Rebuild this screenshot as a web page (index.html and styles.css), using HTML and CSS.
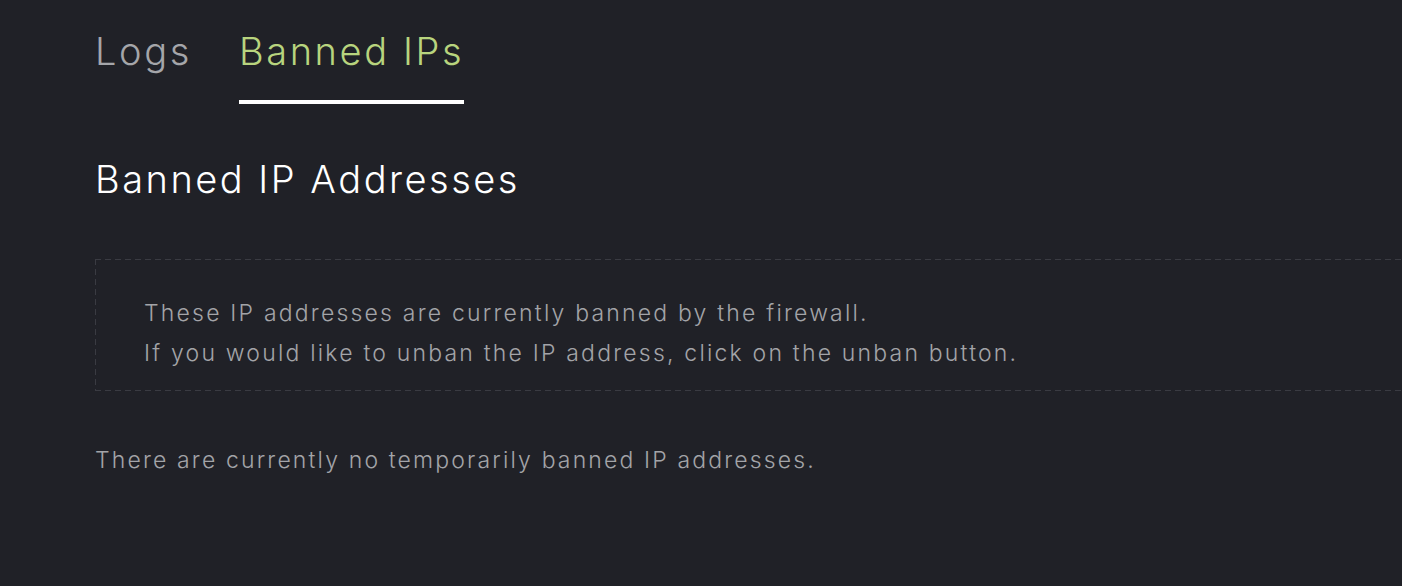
FILE: index.html
```html
<!DOCTYPE html>
<html>
<head>
<meta charset="utf-8">
<link rel="stylesheet" href="styles.css">
</head>
<body>
<div class="page">
  <nav class="tabs">
    <a class="tab">Logs</a>
    <a class="tab active">Banned IPs</a>
  </nav>
  <h1 class="title">Banned IP Addresses</h1>
  <div class="notice">
    <p>These IP addresses are currently banned by the firewall.</p>
    <p>If you would like to unban the IP address, click on the unban button.</p>
  </div>
  <p class="empty">There are currently no temporarily banned IP addresses.</p>
</div>
</body>
</html>
```
FILE: styles.css
```css
html, body {
  margin: 0;
  background: #202127;
  overflow: hidden;
}
body {
  font-family: "Inter", sans-serif;
  color: #a3a4a8;
}
.page {
  padding-left: 95px;
}
.tabs {
  display: flex;
  gap: 47px;
  padding-top: 26px;
}
.tab {
  font-size: 38px;
  line-height: 50px;
  font-weight: 300;
  letter-spacing: 2.6px;
  color: #a5a6aa;
  padding-bottom: 24px;
  border-bottom: 4px solid transparent;
}
.tab.active {
  color: #b8d47e;
  border-bottom-color: #ffffff;
}
.title {
  margin: 50px 0 0;
  font-size: 38px;
  line-height: 50px;
  font-weight: 300;
  letter-spacing: 2.5px;
  color: #ffffff;
}
.notice {
  margin-top: 55px;
  margin-right: -20px;
  padding: 34px 49px 18px;
  background:
    repeating-linear-gradient(90deg, #3a3b42 0 6px, transparent 6px 10px) top left / 100% 1px no-repeat,
    repeating-linear-gradient(90deg, #3a3b42 0 6px, transparent 6px 10px) bottom left / 100% 1px no-repeat,
    repeating-linear-gradient(180deg, #3a3b42 0 6px, transparent 6px 10px) top left / 1px 100% no-repeat;
}
.notice p {
  margin: 0;
  font-size: 23px;
  line-height: 40px;
  font-weight: 300;
  letter-spacing: 2.2px;
}
.empty {
  margin: 49px 0 0;
  font-size: 23px;
  line-height: 40px;
  font-weight: 300;
  letter-spacing: 2.15px;
}
```
